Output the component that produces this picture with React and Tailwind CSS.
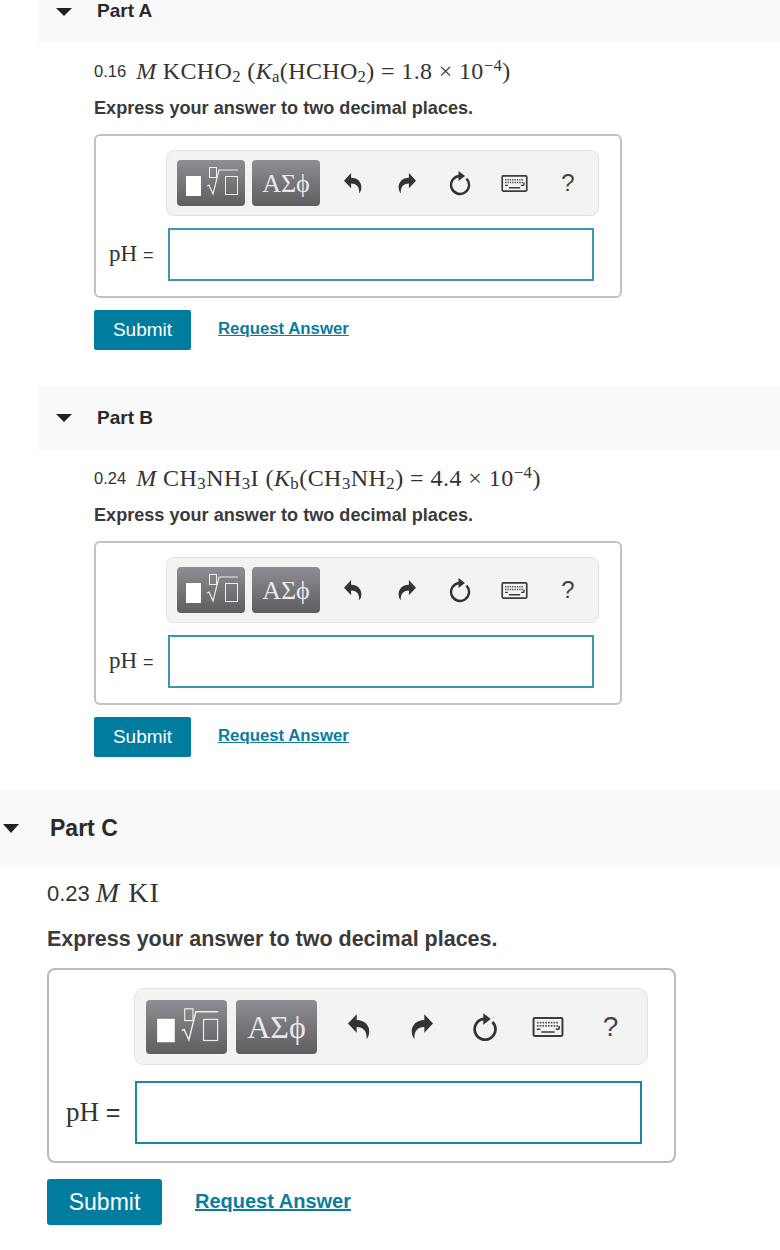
const sans = "font-['Liberation_Sans',Arial,sans-serif]"
const serif = "font-['Liberation_Serif','Times_New_Roman',serif]"

const TemplateIcon = ({ className }) => (
    <svg className={className} viewBox="0 0 68 46" fill="none">
        <rect x="9" y="16" width="15" height="20" fill="#fff" />
        <rect x="32.5" y="7.5" width="7" height="10" stroke="#eee" strokeWidth="1" />
        <path d="M30 26l2-1 4 9 6-24h19" stroke="#eee" strokeWidth="1.2" />
        <rect x="48.5" y="16.5" width="12" height="18" stroke="#eee" strokeWidth="1" />
    </svg>
)

const ArrowIcon = ({ className }) => (
    <svg className={className} viewBox="0 0 19 22" fill="#333">
        <path d="M0 8L7.5 0v5C14.5 5 19 10 18.3 16c-.2 2-1 4-2.3 5.5C16.5 15.500 14 11 7.500 11v5z" />
    </svg>
)

const RefreshIcon = ({ className }) => (
    <svg className={className} viewBox="0 0 24 26" fill="none">
        <path d="M18.4 8.6A9 9 0 1 1 11 6.050" stroke="#333" strokeWidth="2.4" />
        <path d="M10.500 1l6.500 5-6.500 5z" fill="#333" />
    </svg>
)

const KeyboardIcon = ({ className }) => (
    <svg className={className} viewBox="0 0 28 18" fill="none">
        <rect x="1" y="1" width="26" height="16" rx="1" fill="#f3f3f3" stroke="#3c3c3c" strokeWidth="1.8" />
        <path d="M4 5h20M4 8h20" stroke="#555" strokeWidth="1.5" strokeDasharray="1.500 1" />
        <path d="M4 11h3M21 11h3M24 8v3M8 13.500h12" stroke="#3c3c3c" strokeWidth="1.400" />
    </svg>
)

const Toolbar = ({ big }) => {
    const cell = big ? "w-[63px] flex items-center justify-center" : "w-[54px] flex items-center justify-center"
    const btn = big
        ? "w-[81px] h-[54px] rounded-[4px] bg-linear-to-b from-[#8f8e93] to-[#5e5e61] flex items-center justify-center"
        : "w-[68px] h-[46px] rounded-[4px] bg-linear-to-b from-[#8f8e93] to-[#5e5e61] flex items-center justify-center"
    const arrow = big ? "w-[22px] h-[26px]" : "w-[18px] h-[21px] ml-[2px]"

    return (
        <div className={big
            ? "ml-[85px] mt-[18px] w-[514px] h-[77px] pl-[11px] flex items-center bg-[#f3f3f3] border border-[#e2e2e2] rounded-[10px]"
            : "ml-[70px] mt-[14px] w-[433px] h-[66px] pl-[10px] flex items-center bg-[#f3f3f3] border border-[#e2e2e2] rounded-lg"}
        >
            <div className={btn}>
                <TemplateIcon className="w-full h-full" />
            </div>
            <div className={big ? `${btn} ml-[9px]` : `${btn} ml-[7px]`}>
                <span className={big ? `${serif} text-[32px] text-[#e8e8e8]` : `${serif} text-[26px] text-[#e8e8e8]`}>ΑΣϕ</span>
            </div>
            <div className={big ? "ml-[10px] flex items-center" : "ml-[5px] flex items-center"}>
                <div className={cell}><ArrowIcon className={arrow} /></div>
                <div className={cell}><ArrowIcon className={`${arrow} -scale-x-100`} /></div>
                <div className={cell}><RefreshIcon className={big ? "w-[28px] h-[30px]" : "w-[24px] h-[26px]"} /></div>
                <div className={cell}><KeyboardIcon className={big ? "w-[32px] h-[20px]" : "w-[27px] h-[17px]"} /></div>
                <div className={cell}>
                    <span className={big ? `${sans} text-[28px] text-[#444]` : `${sans} text-[24px] text-[#444]`}>?</span>
                </div>
            </div>
        </div>
    )
}

const AnswerBox = ({ big }) => (
    <div className={big
        ? "w-[629px] h-[195px] border-2 border-[#bbb] rounded-lg"
        : "w-[528px] h-[164px] border-2 border-[#c2c2c2] rounded-md"}
    >
        <Toolbar big={big} />
        <div className={big ? "mt-[16px] flex items-center" : "mt-[12px] flex items-center"}>
            <div className={big
                ? `${serif} w-[86px] pl-[17px] text-[27px] text-[#333]`
                : `${serif} w-[72px] pl-[13px] text-[23px] text-[#333]`}
            >
                pH <span className={`${sans} ${big ? "text-[25px]" : "text-[18px]"}`}>=</span>
            </div>
            <div className={big
                ? "w-[507px] h-[63px] border-2 border-[#1d86a3] bg-white"
                : "w-[426px] h-[53px] border-2 border-[#3d97b1] bg-white"}
            />
        </div>
    </div>
)

const Actions = ({ big }) => (
    <div className={big ? "mt-[16px] flex items-center" : "mt-[12px] flex items-center"}>
        <button className={big
            ? `${sans} w-[115px] h-[46px] rounded-[3px] bg-[#007c9e] text-white text-[23px]`
            : `${sans} w-[97px] h-[40px] rounded-[2px] bg-[#007c9e] text-white text-[19px]`}
        >
            Submit
        </button>
        <a className={big
            ? `${sans} ml-[33px] -mt-[3px] font-bold text-[20px] text-[#0a7d9e] underline`
            : `${sans} ml-[27px] -mt-[3px] font-bold text-[16.800px] text-[#0a7d9e] underline`}
        >
            Request Answer
        </a>
    </div>
)

const Sub = ({ children }) => <span className="text-[0.7em] leading-none align-[-0.2em]">{children}</span>
const Sup = ({ children }) => <span className="text-[0.7em] leading-none align-[0.5em]">{children}</span>

const Part = ({ title, amount, children, big, first, className }) => (
    <section className={className}>
        <div className={first
            ? "ml-[38px] h-[43px] pb-[20px] bg-[#f9f9f9] flex items-center"
            : big
                ? "h-[75px] pt-[1px] bg-[#f9f9f9] flex items-center"
                : "ml-[38px] h-[64px] bg-[#f9f9f9] flex items-center"}
        >
            <div className={big
                ? "ml-[3px] w-[47px] flex"
                : "ml-[18px] w-[41px] flex"}
            >
                <div className={big
                    ? "border-x-[8px] border-t-[9px] border-x-transparent border-t-[#222]"
                    : "border-x-[8px] border-t-[8px] border-x-transparent border-t-[#222]"}
                />
            </div>
            <h2 className={big
                ? `${sans} font-bold text-[23px] text-[#2a2a2a]`
                : `${sans} font-bold text-[19px] text-[#2a2a2a]`}
            >
                {title}
            </h2>
        </div>
        <div className={big ? "ml-[47px]" : "ml-[94px]"}>
            <p className={big
                ? `${serif} mt-[10px] h-[36px] flex items-center gap-[6px] whitespace-pre text-[28px] text-[#333]`
                : `${serif} mt-[12px] h-[32px] flex items-center gap-[10px] whitespace-pre text-[24px] text-[#333]`}
            >
                <span className={big ? `${sans} text-[22px]` : `${sans} text-[16.500px]`}>{amount}</span>
                <span>{children}</span>
            </p>
            <p className={big
                ? `${sans} mt-[14px] h-[28px] leading-[28px] font-bold text-[21.500px] text-[#3a3a3a]`
                : `${sans} mt-[9px] h-[24px] leading-[24px] font-bold text-[18.100px] text-[#3a3a3a]`}
            >
                Express your answer to two decimal places.
            </p>
            <div className={big ? "mt-[15px]" : "mt-[14px]"}>
                <AnswerBox big={big} />
            </div>
            <Actions big={big} />
        </div>
    </section>
)

const App = () => (
    <div className="w-[780px] h-[1250px] bg-white overflow-hidden">
        <Part first title="Part A" amount="0.16">
            <span className="tracking-[0.35px]">
                <i>M</i> KCHO<Sub>2</Sub> (<i>K</i><Sub>a</Sub>(HCHO<Sub>2</Sub>) = 1.8 × 10<Sup>−4</Sup>)
            </span>
        </Part>
        <Part className="mt-[36px]" title="Part B" amount="0.24">
            <span className="tracking-[0.45px]">
                <i>M</i> CH<Sub>3</Sub>NH<Sub>3</Sub>I (<i>K</i><Sub>b</Sub>(CH<Sub>3</Sub>NH<Sub>2</Sub>) = 4.4 × 10<Sup>−4</Sup>)
            </span>
        </Part>
        <Part big className="mt-[33px]" title="Part C" amount="0.23">
            <span className="tracking-[1px]">
                <i>M</i> KI
            </span>
        </Part>
    </div>
)

export default App
